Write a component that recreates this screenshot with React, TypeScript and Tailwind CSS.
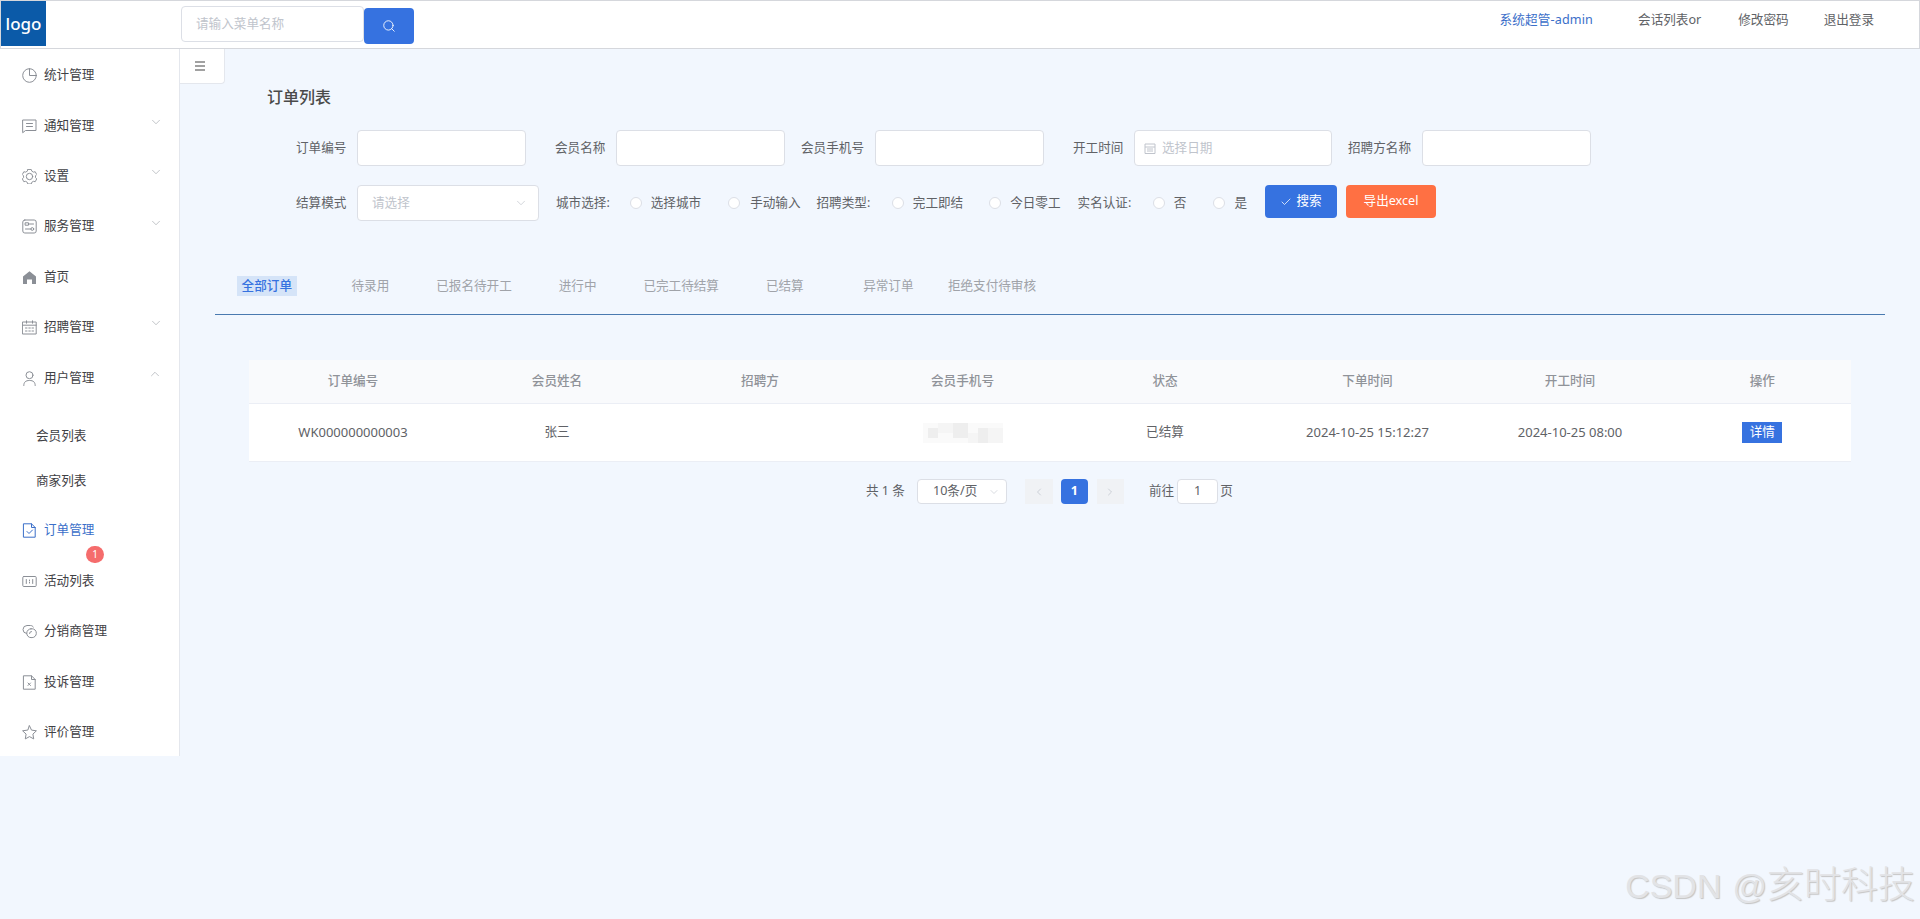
import { Check, ChevronDown, ChevronLeft, ChevronRight, ChevronUp, Search } from 'lucide-react'
import type { ReactNode } from 'react'

const ic = 'w-[15px] h-[15px] shrink-0 text-[#8b8f96]'
const line = { fill: 'none', stroke: 'currentColor', strokeWidth: 1, strokeLinejoin: 'round' as const, strokeLinecap: 'round' as const }

const Icons: Record<string, ReactNode> = {
  pie: (
    <svg viewBox="0 0 15 15" className={ic} {...line}>
      <circle cx="7.5" cy="7.5" r="6.800" />
      <path d="M7.500 .7v6.800h6.800" />
    </svg>
  ),
  chat: (
    <svg viewBox="0 0 15 15" className={ic} {...line}>
      <path d="M1 1h13v10.500H3.500L1 13.500z" />
      <path d="M4.500 4.500h6M4.500 7.500h6" />
    </svg>
  ),
  gear: (
    <svg viewBox="0 0 15 15" className={ic} {...line}>
      <path d="M5.700 .8h3.600l.6 1.800 1.700 1 1.900-.4 1.600 3-1.300 1.300v1.900l1.300 1.300-1.600 3-1.900-.4-1.700 1-.6 1.800H5.700l-.6-1.800-1.700-1-1.900.4-1.600-3 1.300-1.300V7.500L-.1 6.200l1.600-3 1.900.4 1.700-1z" transform="translate(.4 -.3) scale(.95)" />
      <circle cx="7.500" cy="7.500" r="3.200" />
    </svg>
  ),
  service: (
    <svg viewBox="0 0 15 15" className={ic} {...line}>
      <rect x=".8" y="1" width="13.400" height="13" rx="2" />
      <path d="M6.500 5h5M3.500 10h5.500" />
      <rect x="3.500" y="3.800" width="3" height="2.400" />
      <circle cx="10.300" cy="10" r="1.400" />
    </svg>
  ),
  home: (
    <svg viewBox="0 0 15 15" className={ic}>
      <path d="M7.500 1.200 14 6.600V14h-4V9.500H5V14H1V6.600z" fill="currentColor" />
    </svg>
  ),
  calendar: (
    <svg viewBox="0 0 15 15" className={ic} {...line}>
      <rect x=".8" y="2" width="13.400" height="12" />
      <path d="M.8 5.200h13.400M4.500 .8v2.400M10.500 .8v2.400M3.500 8h1.500M6.800 8h1.500M10 8h1.500M3.500 11h1.500M6.800 11h1.500M10 11h1.500" />
    </svg>
  ),
  user: (
    <svg viewBox="0 0 15 15" className={ic} {...line}>
      <circle cx="7.500" cy="4.200" r="3.500" />
      <path d="M1.800 14.500c0-3.400 1.800-5 5.700-5s5.700 1.600 5.700 5" />
    </svg>
  ),
  order: (
    <svg viewBox="0 0 15 15" className={`${ic} !text-[#3b6fc9]`} {...line}>
      <path d="M1.800 .8h7.700l3.700 3.700v9.700H1.800z" />
      <path d="M9.500 .8v3.700h3.700M5 8.500l2 2 3.500-3.500" />
    </svg>
  ),
  activity: (
    <svg viewBox="0 0 15 15" className={ic} {...line}>
      <rect x=".8" y="2.500" width="13.400" height="10" rx="1" />
      <path d="M4.300 5.500v4M10.700 5.500v4M7.500 6v.8M7.500 8.200V9" />
    </svg>
  ),
  link: (
    <svg viewBox="0 0 15 15" className={ic} {...line}>
      <path d="M4.500 9.500A4 4 0 0 1 1 5.500 4.200 4.200 0 0 1 5 1.500h3.500c1.300 0 2.300.6 2.800 1.600" />
      <rect x="4.800" y="4.800" width="9.500" height="8.800" rx="4.200" />
      <path d="M7.500 9.500a2 2 0 0 1 2-2" />
    </svg>
  ),
  complaint: (
    <svg viewBox="0 0 15 15" className={ic} {...line}>
      <path d="M1.800 .8h7.700l3.700 3.700v9.700H1.800z" />
      <path d="M9.500 .8v3.700h3.700M6 8l2.500 2.500M8.500 8 6 10.500" />
    </svg>
  ),
  star: (
    <svg viewBox="0 0 15 15" className={ic} {...line}>
      <path d="M7.500 .8l2 4.300 4.900.7-3.500 3.300.8 4.800-4.200-2.300-4.200 2.300.8-4.800L.6 5.800l4.900-.7z" />
    </svg>
  ),
}

const MENU_TOP = [
  { icon: 'pie', label: '统计管理' },
  { icon: 'chat', label: '通知管理', arrow: 'down' },
  { icon: 'gear', label: '设置', arrow: 'down' },
  { icon: 'service', label: '服务管理', arrow: 'down' },
  { icon: 'home', label: '首页' },
  { icon: 'calendar', label: '招聘管理', arrow: 'down' },
  { icon: 'user', label: '用户管理', arrow: 'up' },
]
const MENU_BOTTOM = [
  { icon: 'activity', label: '活动列表' },
  { icon: 'link', label: '分销商管理' },
  { icon: 'complaint', label: '投诉管理' },
  { icon: 'star', label: '评价管理' },
]
const TABS = ['全部订单', '待录用', '已报名待开工', '进行中', '已完工待结算', '已结算', '异常订单', '拒绝支付待审核']
const COLS = ['订单编号', '会员姓名', '招聘方', '会员手机号', '状态', '下单时间', '开工时间', '操作']
const tableCols = 'grid grid-cols-[209px_199px_207px_198px_207px_198px_207px_1fr] items-center text-center'

function MenuItem({ icon, label, arrow, active }: { icon: string; label: string; arrow?: string; active?: boolean }) {
  return (
    <div className={`relative flex h-[50.4px] items-center pl-[22px] ${active ? 'text-[#3b6fc9]' : 'text-[#3f4145]'}`}>
      {Icons[icon]}
      <span className="ml-[7px]">{label}</span>
      {arrow === 'down' && <ChevronDown className="absolute left-[149px] top-[14px] w-[14px] h-[14px] text-[#a0a4ab]" strokeWidth={1.1} />}
      {arrow === 'up' && <ChevronUp className="absolute left-[148px] top-[14px] w-[14px] h-[14px] text-[#a0a4ab]" strokeWidth={1.1} />}
    </div>
  )
}

function Field({ label, labelW, inputW, ml, children }: { label: string; labelW: string; inputW: string; ml: string; children?: ReactNode }) {
  return (
    <div className={`flex items-center ${ml}`}>
      <span className={`${labelW} text-[#606266]`}>{label}</span>
      <div className={`${inputW} ml-[10px] h-9 flex items-center bg-white border border-[#dcdfe6] rounded`}>{children}</div>
    </div>
  )
}

function Radio({ label, ml, labelMl }: { label: string; ml: string; labelMl: string }) {
  return (
    <span className={`flex items-center ${ml}`}>
      <span className="w-3 h-3 rounded-full bg-white border border-[#dcdfe6]" />
      <span className={`${labelMl} text-[#606266]`}>{label}</span>
    </span>
  )
}

export default function App() {
  return (
    <div className="relative min-h-[919px] overflow-hidden bg-[#f2f7fe] text-[12.6px] font-['Noto_Sans','Noto_Sans_CJK_SC',sans-serif]">
      {/* top bar */}
      <header className="flex h-[49px] items-start border border-[#d5d7dc] bg-white">
        <div className="flex h-[45px] w-[45px] items-center justify-center bg-[#0b5aa8] text-[17px] font-medium text-white">logo</div>
        <div className="ml-[135px] mt-[5px] flex h-9 w-[183px] items-center rounded border border-[#dcdfe6] pl-[14px] text-[#c0c4cc]">请输入菜单名称</div>
        <button className="mt-[7px] flex h-9 w-[50px] items-center justify-center rounded-sm bg-[#3672e0] text-white">
          <Search className="h-[14px] w-[14px]" strokeWidth={1.5} />
        </button>
        <nav className="ml-auto flex items-center pr-[45px] pt-[10px] leading-[18px] text-[#606266]">
          <span className="tracking-[0.15px] text-[#3b6fc9]">系统超管-admin</span>
          <span className="ml-[45px]">会话列表or</span>
          <span className="ml-[37px]">修改密码</span>
          <span className="ml-[35px]">退出登录</span>
        </nav>
      </header>

      <div className="flex items-start">
        {/* side menu */}
        <aside className="h-[707px] w-[180px] shrink-0 border-r border-[#e4e7ed] bg-white pt-[1.5px]">
          {MENU_TOP.map(m => <MenuItem key={m.label} {...m} />)}
          <div className="pb-[1.5px] pl-9 pt-[11px] text-[#3f4145]">
            <div className="flex h-[45px] items-center">会员列表</div>
            <div className="flex h-[45px] items-center">商家列表</div>
          </div>
          <div className="relative">
            <MenuItem icon="order" label="订单管理" active />
            <span className="absolute left-[86px] top-[40px] flex h-[17px] w-[18px] items-center justify-center rounded-full bg-[#f56c6c] text-[10px] text-white">1</span>
          </div>
          {MENU_BOTTOM.map(m => <MenuItem key={m.label} {...m} />)}
        </aside>

        <main className="min-w-0 flex-1">
          <button className="flex h-[35px] w-[44.500px] items-center rounded-br border-b border-r border-[#e4e7ed] bg-white pl-[15px] text-[#444]">
            <svg viewBox="0 0 10 10" className="h-[10px] w-[10px]" fill="none" stroke="currentColor" strokeWidth="1.2">
              <path d="M0 1h10M0 5h10M0 9h10" />
            </svg>
          </button>

          <h1 className="ml-[87px] mt-px text-[16px] font-medium leading-6 text-[#4a4a4a]">订单列表</h1>

          {/* filters */}
          <div className="ml-[116px] mt-[21px] flex">
            <Field label="订单编号" labelW="w-[51px]" inputW="w-[169px]" ml="" />
            <Field label="会员名称" labelW="w-[51px]" inputW="w-[169px]" ml="ml-[29px]" />
            <Field label="会员手机号" labelW="w-[64px]" inputW="w-[169px]" ml="ml-4" />
            <Field label="开工时间" labelW="w-[51px]" inputW="w-[198px]" ml="ml-[29px]">
              <svg viewBox="0 0 12 12" className="ml-[9px] h-3 w-3 text-[#c0c4cc]" fill="none" stroke="currentColor">
                <path d="M1 2h10v9.500H1zM1 5h10M3 7h6M3 9h6" />
              </svg>
              <span className="ml-[6px] text-[#c0c4cc]">选择日期</span>
            </Field>
            <Field label="招聘方名称" labelW="w-[64px]" inputW="w-[169px]" ml="ml-4" />
          </div>

          <div className="ml-[116px] mt-[19px] flex h-9 items-center">
            <span className="w-[51px] text-[#606266]">结算模式</span>
            <div className="ml-[10px] flex h-9 w-[182px] items-center justify-between rounded border border-[#dcdfe6] bg-white pl-[14px] pr-[10px] text-[#c0c4cc]">
              请选择
              <ChevronDown className="h-[14px] w-[14px]" strokeWidth={1.2} />
            </div>
            <span className="ml-[17px] text-[#606266]">城市选择:</span>
            <Radio label="选择城市" ml="ml-5" labelMl="ml-[9px]" />
            <Radio label="手动输入" ml="ml-[27px]" labelMl="ml-[10px]" />
            <span className="ml-4 text-[#606266]">招聘类型:</span>
            <Radio label="完工即结" ml="ml-[21.5px]" labelMl="ml-[9px]" />
            <Radio label="今日零工" ml="ml-[26px]" labelMl="ml-[9px]" />
            <span className="ml-[17px] text-[#606266]">实名认证:</span>
            <Radio label="否" ml="ml-[21.5px]" labelMl="ml-[9px]" />
            <Radio label="是" ml="ml-[27px]" labelMl="ml-[9px]" />
            <button className="-mt-[3px] ml-[18px] flex h-[33px] w-[72px] items-center justify-center gap-1 rounded-sm bg-[#3672e0] text-white">
              <Check className="h-3 w-3" strokeWidth={1.5} />
              搜索
            </button>
            <button className="-mt-[3px] ml-[9px] flex h-[33px] w-[90px] items-center justify-center rounded-sm bg-[#ff7043] text-white">导出excel</button>
          </div>

          {/* tabs */}
          <div className="ml-[35px] mt-9 flex h-[58px] w-[1670px] items-center border-b border-[#4a7ab0]">
            {TABS.map((t, i) => (
              <div key={t} className="flex w-[103.600px] justify-center">
                <span className={i === 0 ? 'bg-[#d5e4f8] px-[5px] font-medium leading-5 text-[#3672e0]' : 'leading-5 text-[#a0a3a9]'}>{t}</span>
              </div>
            ))}
          </div>

          {/* table */}
          <div className="ml-[68.500px] mt-[45px] w-[1602.500px]">
            <div className={`${tableCols} h-11 border-b border-[#ebeef5] bg-[#f9fafc] font-medium text-[#909399]`}>
              {COLS.map(c => <div key={c}>{c}</div>)}
            </div>
            <div className={`${tableCols} h-[58px] border-b border-[#ebeef5] bg-white text-[#606266]`}>
              <div className="text-[13px]">WK000000000003</div>
              <div>张三</div>
              <div />
              <div className="flex justify-center">
                <svg viewBox="0 0 16 4" className="h-5 w-20" preserveAspectRatio="none">
                  <path d="M0 0h16v4H0z" fill="#fafafa" />
                  <path d="M1 1h2v2H1zM6 0h3v3H6zM11 1h2v3h-2z" fill="#eeeeee" />
                  <path d="M3 0h3v2H3zM9 2h2v2H9zM13 1h3v3h-3z" fill="#f5f5f5" />
                </svg>
              </div>
              <div>已结算</div>
              <div className="text-[13px]">2024-10-25 15:12:27</div>
              <div className="text-[13px]">2024-10-25 08:00</div>
              <div className="flex justify-center">
                <button className="flex h-[21px] w-10 items-center justify-center bg-[#3672e0] text-white">详情</button>
              </div>
            </div>
          </div>

          {/* pagination */}
          <div className="ml-[686px] mt-[17px] flex h-[25px] items-center text-[#606266]">
            <span>共 1 条</span>
            <div className="ml-3 flex h-[25px] w-[90px] items-center justify-between rounded-sm border border-[#dcdfe6] bg-white pl-[15px] pr-[6px]">
              10条/页
              <ChevronDown className="h-3 w-3 text-[#c0c4cc]" strokeWidth={1.2} />
            </div>
            <div className="ml-[18px] flex h-[25px] w-[28px] items-center justify-center bg-[#f0f2f5] text-[#c0c4cc]">
              <ChevronLeft className="h-3 w-3" strokeWidth={1.5} />
            </div>
            <div className="ml-2 flex h-[25px] w-[27px] items-center justify-center rounded-sm bg-[#3672e0] font-bold text-white">1</div>
            <div className="ml-[9px] flex h-[25px] w-[27px] items-center justify-center bg-[#f0f2f5] text-[#c0c4cc]">
              <ChevronRight className="h-3 w-3" strokeWidth={1.5} />
            </div>
            <span className="ml-[25px]">前往</span>
            <div className="ml-[3px] flex h-[25px] w-[41px] items-center justify-center rounded-sm border border-[#dcdfe6] bg-white">1</div>
            <span className="ml-[2px]">页</span>
          </div>
        </main>
      </div>

      {/* watermark */}
      <div className="pointer-events-none absolute right-[5px] top-[863px] whitespace-nowrap font-['Liberation_Sans','Noto_Sans_CJK_SC',sans-serif] text-[34px] font-light leading-[46px] text-[#e2e3e6] [text-shadow:1px_1px_1px_#c4c4c4]">
        CSDN<span className="ml-[11px]">@</span><span className="text-[37px]">亥时科技</span>
      </div>
    </div>
  )
}
